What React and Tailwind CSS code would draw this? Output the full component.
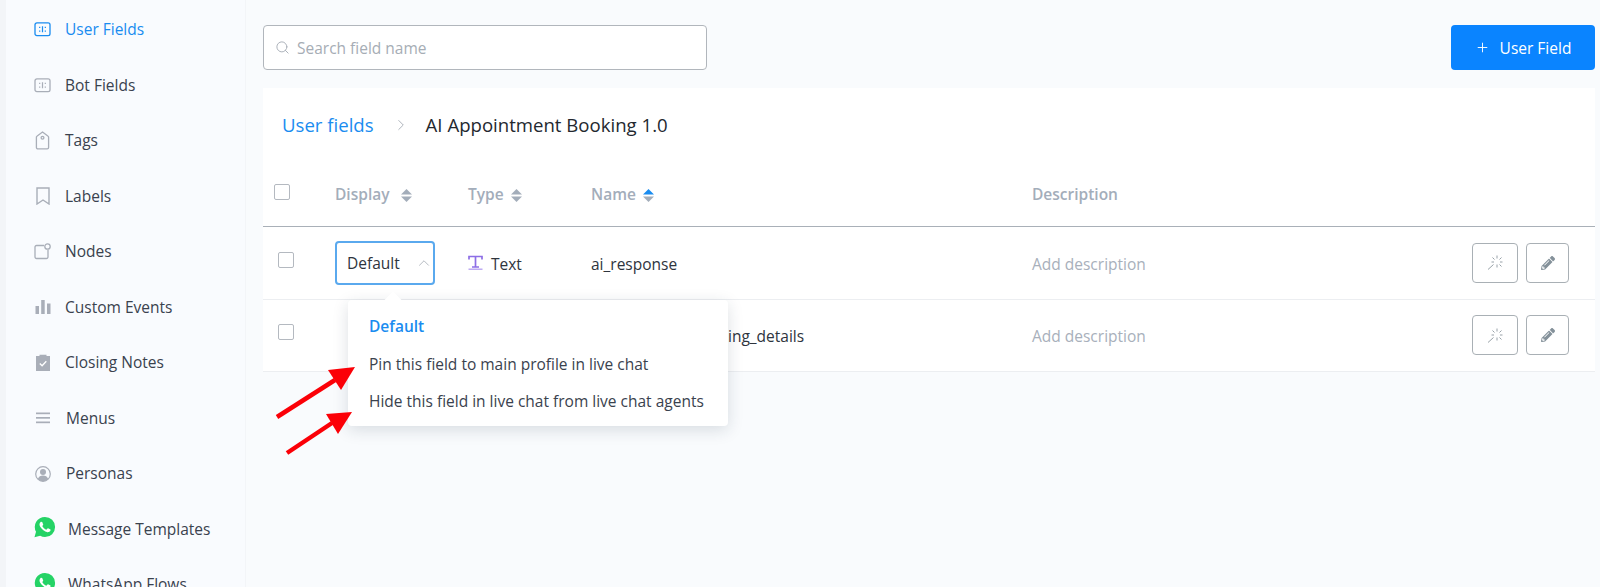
import React from "react";
import { Search, Plus, ChevronUp, ChevronRight } from "lucide-react";
import { FaPencilAlt } from "react-icons/fa";

function FieldIcon({ className }) {
  return (
    <svg viewBox="0 0 18 16" className={className} fill="none" stroke="currentColor">
      <rect x="1" y="1" width="16" height="13.5" rx="2" strokeWidth="1.4" />
      <path d="M6 5v1.500M6 9v1.500M9 4.500v6.500M12 5v1.500M12 9v1.500" strokeWidth="1.3" />
    </svg>
  );
}

function TagIcon({ className }) {
  return (
    <svg viewBox="0 0 16 20" className={className} fill="none" stroke="currentColor" strokeWidth="1.4">
      <path d="M8 1l6 4.500a1 1 0 0 1 .5 1V17.500a1.500 1.500 0 0 1-1.500 1.500H3a1.500 1.500 0 0 1-1.500-1.500V6.500a1 1 0 0 1 .5-1z" />
      <circle cx="8" cy="7" r="1.500" />
    </svg>
  );
}

function BookmarkIcon({ className }) {
  return (
    <svg viewBox="0 0 14 18" className={className} fill="none" stroke="currentColor" strokeWidth="1.4">
      <path d="M1 1h12v16l-6-4-6 4z" />
    </svg>
  );
}

function NodeIcon({ className }) {
  return (
    <svg viewBox="0 0 17 17" className={className} fill="none" stroke="currentColor" strokeWidth="1.3">
      <path d="M10 2.500H2.500a1.500 1.500 0 0 0-1.500 1.500v10a1.500 1.500 0 0 0 1.500 1.500h10a1.500 1.500 0 0 0 1.500-1.500V7" />
      <circle cx="13.500" cy="3.500" r="2.700" />
    </svg>
  );
}

function BarsIcon({ className }) {
  return (
    <svg viewBox="0 0 16 16" className={className} fill="currentColor">
      <rect x="0.500" y="7" width="3.500" height="8" />
      <rect x="6.200" y="1" width="3.500" height="14" />
      <rect x="12" y="4.500" width="3.500" height="10.500" />
    </svg>
  );
}

function ClipboardIcon({ className }) {
  return (
    <svg viewBox="0 0 14 17" className={className}>
      <path fill="currentColor" d="M0 2h3.500V.8h7V2H14v15H0z" />
      <path fill="none" stroke="#fff" strokeWidth="1.300" d="M3.800 9.500l2.300 2.300 4.200-4.500" />
    </svg>
  );
}

function MenuIcon({ className }) {
  return (
    <svg viewBox="0 0 14 12" className={className} fill="currentColor">
      <rect y="0.500" width="14" height="1.700" />
      <rect y="5" width="14" height="1.700" />
      <rect y="9.500" width="14" height="1.700" />
    </svg>
  );
}

function PersonaIcon({ className }) {
  return (
    <svg viewBox="0 0 16 16" className={className}>
      <circle cx="8" cy="8" r="7.300" fill="none" stroke="currentColor" strokeWidth="1.200" />
      <circle cx="8" cy="6" r="3" fill="currentColor" />
      <path fill="currentColor" d="M2.800 13c.8-2.500 2.800-3.500 5.200-3.500s4.400 1 5.200 3.500A7.200 7.200 0 0 1 8 15.300 7.200 7.200 0 0 1 2.800 13z" />
    </svg>
  );
}

// solid bubble, the package icons only have the outlined one
function WhatsappIcon({ className }) {
  return (
    <svg viewBox="0 0 24 24" className={className}>
      <path fill="#25d366" d="M12 1a11 11 0 0 1 0 22c-1.900 0-3.700-.5-5.300-1.400L.5 23.300l1.700-6A11 11 0 0 1 12 1z" />
      <path
        fill="#fff"
        d="M17.472 14.382c-.297-.149-1.758-.867-2.030-.967-.273-.099-.471-.148-.670.150-.197.297-.767.966-.940 1.164-.173.199-.347.223-.644.075-.297-.150-1.255-.463-2.390-1.475-.883-.788-1.480-1.761-1.653-2.059-.173-.297-.018-.458.130-.606.134-.133.298-.347.446-.520.149-.174.198-.298.298-.497.099-.198.050-.371-.025-.520-.075-.149-.669-1.612-.916-2.207-.242-.579-.487-.500-.669-.510-.173-.008-.371-.010-.570-.010-.198 0-.520.074-.792.372-.272.297-1.040 1.016-1.040 2.479 0 1.462 1.065 2.875 1.213 3.074.149.198 2.096 3.200 5.077 4.487.709.306 1.262.489 1.694.625.712.227 1.360.195 1.871.118.571-.085 1.758-.719 2.006-1.413.248-.694.248-1.289.173-1.413-.074-.124-.272-.198-.570-.347z"
      />
    </svg>
  );
}

function SortIcon({ active }) {
  return (
    <svg viewBox="0 0 11 13" className="w-[11px] h-[13px]">
      <path d="M5.500 0L11 5.500H0z" fill={active ? "#1a8cf0" : "#a3adba"} />
      <path d="M5.500 13L11 7.500H0z" fill="#a3adba" />
    </svg>
  );
}

function WandIcon() {
  return (
    <svg viewBox="0 0 16 15" className="w-[16px] h-[15px]" fill="none" stroke="#98a1a8" strokeWidth="1">
      <path d="M1 14.500l5.500-5M10 .5v3M10 9.500v3M5.500 2.500l2 2M14.500 2.500l-2 2M4.500 7h2.500M13 7h2.500M12.500 9.500l2 2" />
    </svg>
  );
}

function TextTypeIcon() {
  return (
    <svg viewBox="0 0 15 15" className="w-[15px] h-[15px]" fill="none" stroke="#8d6ee6" strokeWidth="1.700">
      <path d="M1 4.500V1.500h13v3M7.500 1.500v10.500M4 12h7" />
      <path d="M0.500 14.200h14" strokeWidth="1.300" stroke="#b39df0" />
    </svg>
  );
}

const navItems = [
  { label: "User Fields", icon: <FieldIcon className="w-[17px] h-[15px] shrink-0" />, active: true },
  { label: "Bot Fields", icon: <FieldIcon className="w-[17px] h-[15px] shrink-0" /> },
  { label: "Tags", icon: <TagIcon className="w-[15px] h-[19px] shrink-0" /> },
  { label: "Labels", icon: <BookmarkIcon className="w-[14px] h-[18px] shrink-0" /> },
  { label: "Nodes", icon: <NodeIcon className="w-[17px] h-[17px] shrink-0" /> },
  { label: "Custom Events", icon: <BarsIcon className="w-[16px] h-[16px] shrink-0" /> },
  { label: "Closing Notes", icon: <ClipboardIcon className="w-[14px] h-[17px] shrink-0" /> },
  { label: "Menus", icon: <MenuIcon className="w-[14px] h-[12px] shrink-0" />, textClass: "ml-[1px]" },
  { label: "Personas", icon: <PersonaIcon className="w-[16px] h-[16px] shrink-0" />, textClass: "ml-[1px]" },
  { label: "Message Templates", icon: <WhatsappIcon className="w-[22px] h-[22px] shrink-0 translate-x-[2px] -translate-y-[2px]" />, textClass: "ml-[3px]" },
  { label: "WhatsApp Flows", icon: <WhatsappIcon className="w-[22px] h-[22px] shrink-0 translate-x-[2px] -translate-y-[2px]" />, textClass: "ml-[3px]" },
];

function Sidebar() {
  return (
    <div className="w-[239px] ml-[6px] h-[587px] shrink-0 bg-[#f9fbfe] pt-[2px] overflow-hidden">
      {navItems.map((item) => (
        <div key={item.label} className="flex items-center h-[55.5px] pl-[28px] shrink-0">
          <div className={`w-[31px] shrink-0 flex items-center ${item.active ? "text-[#1a8cf0]" : "text-[#a9aeb8]"}`}>
            <span className="w-[17px] flex justify-center">{item.icon}</span>
          </div>
          <span className={`text-[15.5px] ${item.textClass || ""} ${item.active ? "text-[#1a8cf0]" : "text-[#3a424e]"}`}>
            {item.label}
          </span>
        </div>
      ))}
    </div>
  );
}

function Checkbox() {
  return <div className="w-[16px] h-[16px] rounded-[2px] border-[1.5px] border-[#b4b9c0] bg-white" />;
}

function RowActions() {
  return (
    <div className="flex items-center gap-[8px] ml-auto mr-[26px]">
      <button className="w-[46px] h-[40px] rounded-[4px] border-[1.5px] border-[#a9b0b5] flex items-center justify-center">
        <WandIcon />
      </button>
      <button className="w-[43px] h-[40px] rounded-[4px] border-[1.5px] border-[#a9b0b5] flex items-center justify-center">
        <FaPencilAlt className="w-[14px] h-[14px] text-[#84919a]" />
      </button>
    </div>
  );
}

function Row({ display, name }) {
  return (
    <div className="flex items-center h-[72.5px] text-[15.5px] text-[#2e343d] border-b border-[#eceef1]">
      <div className="w-[72px] pl-[15px] shrink-0 -mt-[6px]">
        <Checkbox />
      </div>
      <div className="w-[133px] shrink-0">{display}</div>
      <div className="w-[123px] shrink-0 flex items-center gap-[8px]">
        <TextTypeIcon />
        <span className="mt-[3px]">Text</span>
      </div>
      <div className="w-[441px] shrink-0 mt-[3px]">{name}</div>
      <span className="text-[#a8b0bb] mt-[3px]">Add description</span>
      <RowActions />
    </div>
  );
}

export default function App() {
  return (
    <div className="relative flex w-[1600px] h-[587px] overflow-hidden bg-[#f3f5f8] text-[#2e343d] font-['Open_Sans',sans-serif]">
      <Sidebar />

      <div className="flex-1 min-w-0 ml-[1px] pl-[17px] pr-[5px] pt-[25px] bg-[#f9fbfd]">
        <div className="flex items-center justify-between">
          <div className="flex items-center w-[444px] h-[45px] rounded-[4px] border-[1.5px] border-[#b1b6bc] bg-white pl-[11px] gap-[7px]">
            <Search className="w-[15px] h-[15px] text-[#a6adb5]" strokeWidth={1.5} />
            <span className="text-[15.5px] text-[#a6adb5] mt-[2px]">Search field name</span>
          </div>
          <button className="flex items-center justify-center gap-[10px] w-[144px] h-[45px] rounded-[4px] bg-[#0a84ff] text-white text-[15.5px] font-medium">
            <Plus className="w-[15px] h-[15px]" strokeWidth={1.5} />
            <span className="mt-[2px]">User Field</span>
          </button>
        </div>

        <div className="mt-[18px] bg-white">
          <div className="flex items-center h-[72px] pl-[19px] pt-[2px]">
            <span className="text-[18.6px] text-[#1a8cf0]">User fields</span>
            <ChevronRight className="w-[18px] h-[18px] text-[#a6adb5] ml-[18px] mr-[16px]" strokeWidth={1.2} />
            <span className="text-[18.6px] text-[#23282f]">AI Appointment Booking 1.0</span>
          </div>

          <div className="flex items-center h-[67px] pt-[4px] border-b-[1.5px] border-[#a9b0b8] text-[15.5px] font-semibold text-[#a3adba]">
            <div className="w-[72px] pl-[11px] shrink-0 -mt-[7px]">
              <Checkbox />
            </div>
            <div className="w-[133px] shrink-0 flex items-center gap-[11px]">
              Display <SortIcon />
            </div>
            <div className="w-[123px] shrink-0 flex items-center gap-[7px]">
              Type <SortIcon />
            </div>
            <div className="w-[441px] shrink-0 flex items-center gap-[7px]">
              Name <SortIcon active />
            </div>
            <span>Description</span>
          </div>

          <Row
            name="ai_response"
            display={
              <div className="flex items-center justify-between w-[100px] h-[44px] rounded-[4px] border-2 border-[#5aa9ee] pl-[10px] -mr-[1px]">
                <span className="mt-[2px]">Default</span>
                <ChevronUp className="w-[18px] h-[18px] text-[#a6adb5]" strokeWidth={1.1} />
              </div>
            }
          />
          <Row name="appointment_booking_details" />
        </div>
      </div>

      {/* Dropdown menu over the table */}
      <div className="absolute left-[348px] top-[300px] w-[380px] h-[126px] bg-white rounded-[4px] shadow-[0_4px_16px_rgba(30,45,70,0.15)] pl-[21px] pt-[16px] text-[15.5px] text-[#3a424e]">
        <div className="absolute -top-[6px] left-[39px] w-[12px] h-[12px] bg-white rotate-45" />
        <div className="relative h-[37.5px] leading-[21px] font-semibold text-[#1a8cf0]">Default</div>
        <div className="h-[37.5px] leading-[21px]">Pin this field to main profile in live chat</div>
        <div className="h-[37.5px] leading-[21px]">Hide this field in live chat from live chat agents</div>
      </div>

      {/* Red annotation arrows */}
      <svg className="absolute left-[270px] top-[360px] w-[100px] h-[100px]" viewBox="0 0 100 100">
        <path d="M7 57L65 20" stroke="#fb0007" strokeWidth="4.500" />
        <path d="M85 7L58 10 71 30z" fill="#fb0007" />
        <path d="M17 93L62 63" stroke="#fb0007" strokeWidth="4.500" />
        <path d="M82 52L56 54 68 74z" fill="#fb0007" />
      </svg>
    </div>
  );
}
